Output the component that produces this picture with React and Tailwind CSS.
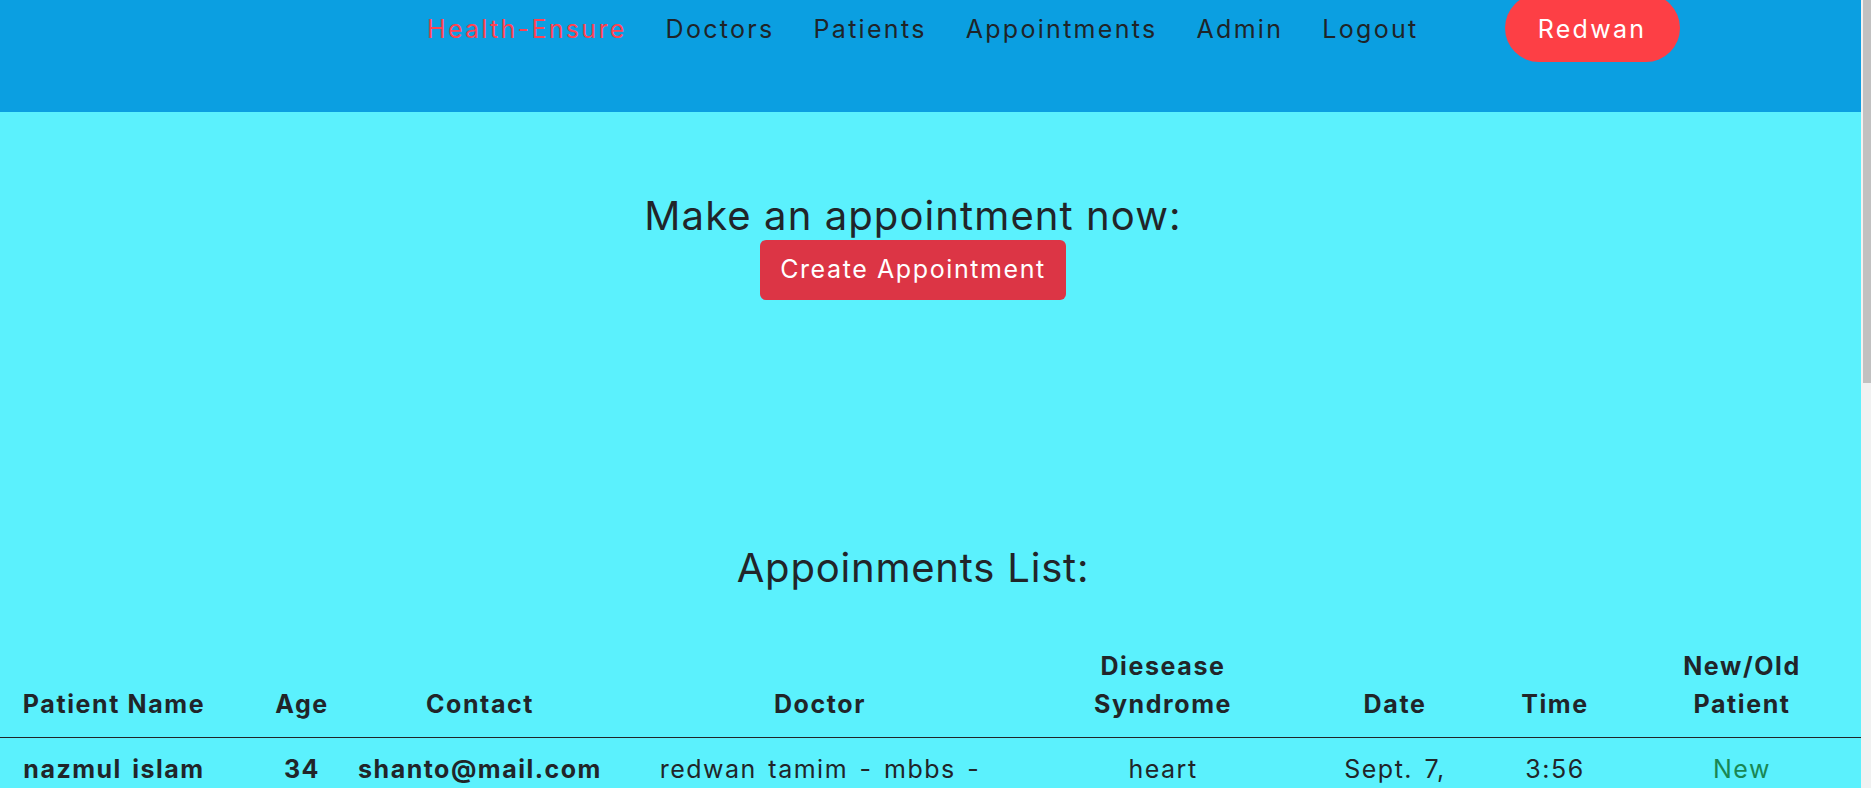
import React from 'react';

const navLinks = ['Doctors', 'Patients', 'Appointments', 'Admin', 'Logout'];

const headers = [
    ['Patient Name'],
    ['Age'],
    ['Contact'],
    ['Doctor'],
    ['Diesease', 'Syndrome'],
    ['Date'],
    ['Time'],
    ['New/Old', 'Patient'],
];

// first appointment row (the rest of the table is below the fold)
const rows = [
    {
        id: 1,
        cells: [
            { text: 'nazmul islam', bold: true },
            { text: '34', bold: true },
            { text: 'shanto@mail.com', bold: true },
            { text: 'redwan tamim - mbbs -' },
            { text: 'heart' },
            { text: 'Sept. 7,' },
            { text: '3:56' },
            { text: 'New', green: true },
        ],
    },
];

// extra left padding so the text centres land where the table put them
const cellPad = ['', '', '', '', '', 'pl-[20px]', '', 'pl-[13px]'];

const App = () => {
    return (
        <div className="flex w-full h-[788px] overflow-hidden bg-[#5bf1fd] text-[#212529] font-['Inter','Liberation_Sans',sans-serif]">
            <div className="flex-1 flex flex-col min-w-0">
                <nav className="h-[112px] shrink-0 bg-[#0b9fe1] flex items-start overflow-hidden">
                    <div className="flex items-center h-[68px] -mt-[6px] pl-[427px] text-[25px] tracking-[2.3px]">
                        <a className="mt-[4px] text-[#ff4352]">Health-Ensure</a>
                        {navLinks.map((l) => (
                            <a key={l} className="mt-[4px] ml-[39px] text-[#1f2428]">{l}</a>
                        ))}
                        <button className="ml-[86px] h-[68px] w-[175px] pt-[4px] rounded-full bg-[#fd3f45] text-white text-[25px] tracking-[2.3px]">
                            Redwan
                        </button>
                    </div>
                </nav>

                <div className="flex flex-col items-center pt-[80px] pr-[35px]">
                    <h2 className="text-[40px] leading-[48px] font-normal tracking-[1.1px]">Make an appointment now:</h2>
                    <button className="h-[60px] px-[20px] rounded-[6px] bg-[#dc3545] text-white text-[25px] tracking-[1.6px]">
                        Create Appointment
                    </button>
                    <h2 className="mt-[244px] text-[40px] leading-[48px] font-normal tracking-[0.8px]">Appoinments List:</h2>
                </div>

                <div className="mt-[55px] grid grid-cols-[228px_148px_208px_472px_214px_230px_110px_1fr] text-[25px] leading-[38px] tracking-[1.6px] border-b border-[#212529] pb-[14px]">
                    {headers.map((h, i) => (
                        <div key={i} className={`flex flex-col justify-end items-center text-center font-bold whitespace-nowrap ${cellPad[i]}`}>
                            {h.map((line) => (
                                <span key={line}>{line}</span>
                            ))}
                        </div>
                    ))}
                </div>

                {rows.map((r) => (
                    <div key={r.id} className="grid grid-cols-[228px_148px_208px_472px_214px_230px_110px_1fr] text-[25px] leading-[38px] tracking-[1.5px] [word-spacing:3px] pt-[12px]">
                        {r.cells.map((c, i) => (
                            <div
                                key={i}
                                className={`flex justify-center whitespace-nowrap ${cellPad[i]} ${c.bold ? 'font-bold' : 'font-normal'} ${c.green ? 'text-[#198754]' : ''}`}
                            >
                                <span className="shrink-0">{c.text}</span>
                            </div>
                        ))}
                    </div>
                ))}
            </div>

            {/* browser scrollbar */}
            <div className="w-[10px] shrink-0 bg-[#f1f1f1] flex justify-end">
                <div className="w-[8px] h-[383px] bg-[#c1c1c1]"></div>
            </div>
        </div>
    );
};

export default App;
